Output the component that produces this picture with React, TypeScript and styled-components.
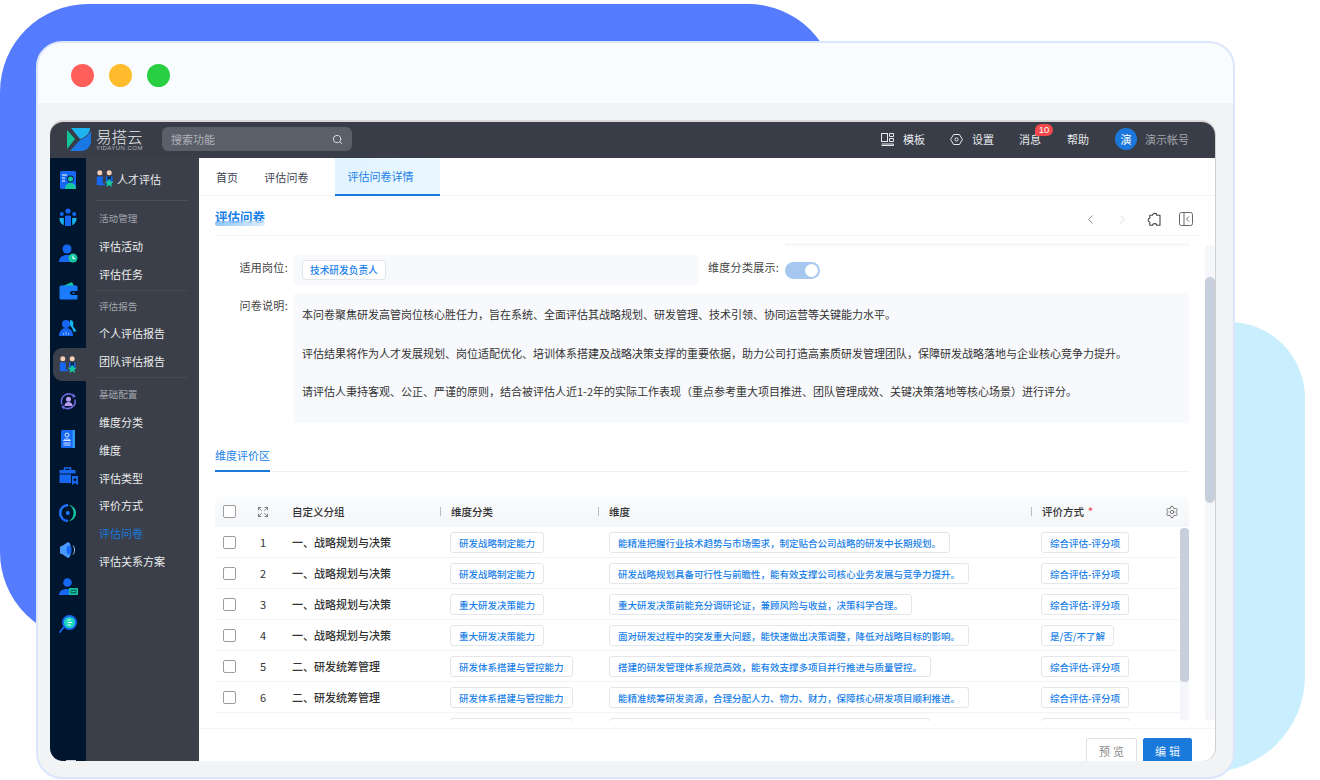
import { ChevronLeft, ChevronRight, Expand, Search, Settings } from 'lucide-react';
import styled, { createGlobalStyle } from 'styled-components';

const GlobalStyle = createGlobalStyle`
  html, body {
    margin: 0;
    padding: 0;
    background: #fff;
    overflow: hidden;
  }
  * {
    box-sizing: border-box;
  }
  body {
    font-family: "Noto Sans CJK SC", "Noto Sans", sans-serif;
  }
`;

const Page = styled.div`
  position: relative;
  width: 1320px;
  height: 780px;
  padding: 41px 85px 0 36px;
  overflow: hidden;
`;

const BlueBlob = styled.div`
  position: absolute;
  left: 0;
  top: 4px;
  width: 836px;
  height: 636px;
  border-radius: 88px;
  background: #557bff;
`;

const CyanBlob = styled.div`
  position: absolute;
  left: 900px;
  top: 322px;
  width: 405px;
  height: 450px;
  border-radius: 76px 76px 96px 76px;
  background: #c9efff;
`;

const Window = styled.div`
  position: relative;
  width: 1199px;
  height: 738px;
  display: flex;
  flex-direction: column;
  border: 2px solid #d9e6fc;
  border-radius: 26px;
  background: #f1f3f5;
  overflow: hidden;
`;

const TitleBar = styled.div`
  height: 60px;
  flex: none;
  display: flex;
  align-items: center;
  gap: 15px;
  padding: 5px 0 0 33px;
  background: #f9fcff;
`;

const Light = styled.span<{ $color: string }>`
  width: 23px;
  height: 23px;
  border-radius: 50%;
  background: ${(p) => p.$color};
`;

const AppFrame = styled.div`
  flex: none;
  width: 1165px;
  height: 639px;
  margin: 19px 0 0 12px;
  display: flex;
  flex-direction: column;
  border-radius: 13px;
  overflow: hidden;
  background: #fff;
  box-shadow: 0 -2px 0 #d9d9d9, 1px 0 0 #cfcfcf;
`;

const Header = styled.header`
  height: 36px;
  flex: none;
  display: flex;
  align-items: center;
  padding: 0 26px 2px 17px;
  background: #383d48;
  color: #e8e9eb;
  font-size: 11px;
`;

const LogoBox = styled.div`
  display: flex;
  align-items: center;
  gap: 5px;
  width: 95px;
`;

const LogoText = styled.div`
  display: flex;
  flex-direction: column;
  color: #e6e7e9;
`;

const LogoName = styled.span`
  font-size: 15.5px;
  line-height: 17px;
  font-weight: 300;
`;

const LogoSub = styled.span`
  font-family: "Liberation Sans", sans-serif;
  font-size: 6px;
  line-height: 6px;
  letter-spacing: 0.45px;
  color: #b5b8bd;
`;

const SearchBox = styled.div`
  width: 190px;
  height: 24px;
  display: flex;
  align-items: center;
  justify-content: space-between;
  padding: 0 9px;
  border-radius: 6px;
  background: #5a5f6a;
  color: #b0b3b9;
`;

const HeaderRight = styled.div`
  margin-left: auto;
  display: flex;
  align-items: center;
`;

const HeaderItem = styled.div<{ $gap?: number }>`
  position: relative;
  display: flex;
  align-items: center;
  gap: 9px;
  margin-right: ${(p) => p.$gap ?? 25}px;
`;

const Badge = styled.span`
  position: absolute;
  left: 16px;
  top: -7px;
  width: 18px;
  height: 12px;
  border-radius: 6px 6px 6px 2px;
  background: #f0484b;
  color: #fff;
  font-family: "Liberation Sans", sans-serif;
  font-size: 9.5px;
  line-height: 12px;
  text-align: center;
`;

const Avatar = styled.span`
  width: 22px;
  height: 22px;
  border-radius: 50%;
  background: #1b78da;
  color: #fff;
  text-align: center;
  line-height: 22px;
  margin-right: 8px;
`;

const AccountName = styled.span`
  color: #a3a6ac;
`;

const Workspace = styled.div`
  flex: 1;
  min-height: 0;
  display: flex;
`;

const Rail = styled.nav`
  width: 36px;
  flex: none;
  display: flex;
  flex-direction: column;
  padding: 3px 0 0 3px;
  background: #00152e;
  position: relative;
`;

const RailItem = styled.div<{ $active?: boolean }>`
  height: 37px;
  display: flex;
  align-items: center;
  justify-content: center;
  padding-right: 3px;
  ${(p) =>
    p.$active
      ? `
    background: #3a3f4a;
    border-radius: 9px 0 0 9px;
    height: 33px;
    margin: 2px 0;
  `
      : ''}
`;

const RailFoot = styled.span`
  position: absolute;
  left: 16px;
  bottom: 0;
  width: 10px;
  height: 1px;
  background: #cfd3d8;
`;

const Menu = styled.aside`
  width: 113px;
  flex: none;
  display: flex;
  flex-direction: column;
  padding: 0 11px 0 10px;
  background: #3a3f4a;
  color: #e9eaec;
  font-size: 11px;
`;

const MenuTitle = styled.div`
  height: 43px;
  flex: none;
  display: flex;
  align-items: center;
  gap: 3px;
  border-bottom: 1px solid #4a4f5a;
`;

const MenuGroup = styled.div<{ $top: number }>`
  height: 28px;
  flex: none;
  display: flex;
  align-items: center;
  padding-left: 3px;
  margin-top: ${(p) => p.$top}px;
  color: #a3a6ac;
  font-size: 9.6px;
`;

const MenuItem = styled.div<{ $active?: boolean }>`
  height: 27.8px;
  flex: none;
  display: flex;
  align-items: center;
  padding-left: 3px;
  color: ${(p) => (p.$active ? '#1a7adb' : '#eceded')};
`;

const MenuLine = styled.div`
  height: 1px;
  flex: none;
  margin-top: 2px;
  background: #454a55;
`;

const Main = styled.main`
  flex: 1;
  min-width: 0;
  display: flex;
  flex-direction: column;
  color: #333;
  font-size: 11px;
`;

const Tabs = styled.div`
  height: 38px;
  flex: none;
  display: flex;
  align-items: stretch;
  gap: 26px;
  padding-left: 17px;
  border-bottom: 1px solid #f2f3f5;
`;

const Tab = styled.div<{ $active?: boolean }>`
  display: flex;
  align-items: center;
  color: ${(p) => (p.$active ? '#1a7fe8' : '#3d4250')};
  letter-spacing: ${(p) => (p.$active ? 0 : 0.1)}px;
  ${(p) =>
    p.$active
      ? `
    padding: 0 26px 0 13px;
    background: linear-gradient(90deg, #e2f3ff, #ebf7ff);
    border-bottom: 2px solid #1a7adb;
    margin-bottom: -1px;
  `
      : ''}
`;

const PageHead = styled.div`
  height: 40px;
  flex: none;
  display: flex;
  align-items: center;
  justify-content: space-between;
  margin: 0 16px;
  padding: 7px 6px 0 0;
  border-bottom: 1px solid #f3f4f6;
`;

const PageTitle = styled.h1`
  position: relative;
  margin: -5px 0 0;
  color: #1a7fe8;
  font-size: 12.5px;
  font-weight: 700;
  &::after {
    content: '';
    position: absolute;
    left: 0;
    right: 0;
    bottom: 0;
    height: 5px;
    border-radius: 3px;
    background: linear-gradient(90deg, #6cb2f4, #d5e9fc);
    opacity: 0.75;
  }
`;

const PageTools = styled.div`
  display: flex;
  align-items: center;
  gap: 17px;
  color: #666;
`;

const Body = styled.div`
  flex: 1;
  min-height: 0;
  display: flex;
`;

const Scroll = styled.div`
  flex: 1;
  min-width: 0;
  display: flex;
  flex-direction: column;
  padding: 7px 16px 0;
  overflow: hidden;
`;

const Sliver = styled.div`
  width: 404px;
  height: 3px;
  flex: none;
  align-self: flex-end;
  background: #f5f7fb;
`;

const FieldRow = styled.div`
  display: flex;
  align-items: flex-start;
  flex: none;
  margin-top: 9px;
`;

const DescRow = styled(FieldRow)`
  margin-top: 8px;
`;

const FieldLabel = styled.div`
  width: 73px;
  margin-right: 6px;
  text-align: right;
  line-height: 25px;
  letter-spacing: 0.3px;
  color: #444;
`;

const PostField = styled.div`
  width: 404px;
  height: 30px;
  display: flex;
  align-items: center;
  padding-left: 8px;
  border-radius: 3px;
  background: #f8f9fc;
`;

const SwitchLabel = styled.div`
  margin: 0 6px 0 10px;
  line-height: 25px;
  letter-spacing: 0.3px;
  color: #444;
`;

const Toggle = styled.div`
  width: 35px;
  height: 17px;
  margin-top: 7px;
  display: flex;
  align-items: center;
  justify-content: flex-end;
  padding-right: 2px;
  border-radius: 9px;
  background: #a6c7f0;
  &::after {
    content: '';
    width: 13px;
    height: 13px;
    border-radius: 50%;
    background: #fff;
  }
`;

const DescBox = styled.div`
  width: 895px;
  height: 130px;
  padding: 12px 8px 0;
  border-radius: 3px;
  background: #f8f9fc;
  line-height: 19.25px;
  color: #333;
`;

const Paragraph = styled.p`
  margin: 0 0 19.25px;
  white-space: nowrap;
`;

const SectionTabs = styled.div`
  flex: none;
  margin-top: 24px;
  height: 25px;
  border-bottom: 1px solid #f0f1f4;
`;

const SectionTab = styled.div`
  display: inline-block;
  height: 25px;
  line-height: 17px;
  border-bottom: 2px solid #1a7adb;
  color: #1a7fe8;
`;

const Table = styled.div`
  flex: none;
  margin-top: 25px;
  position: relative;
`;

const cols = '30px 36px 159px 158px 433px 158px';

const TableHead = styled.div`
  height: 30px;
  display: grid;
  grid-template-columns: ${cols};
  align-items: center;
  padding-bottom: 1px;
  border-radius: 3px 3px 0 0;
  background: linear-gradient(180deg, #fafbfc, #f5f6f9);
  font-weight: 500;
  font-size: 10.5px;
  color: #333;
`;

const HeadCell = styled.div<{ $sep?: boolean }>`
  position: relative;
  display: flex;
  align-items: center;
  justify-content: space-between;
  padding: 0 10px 0 11px;
  ${(p) =>
    p.$sep
      ? `
    &::before {
      content: '';
      position: absolute;
      left: 0;
      top: 3px;
      bottom: 3px;
      width: 1px;
      background: #b9bcc4;
    }
  `
      : ''}
`;

const Required = styled.span`
  color: #f0484b;
  margin-left: 4px;
`;

const HeadTitle = styled.span`
  display: flex;
  align-items: center;
`;

const CenterCell = styled.div`
  display: flex;
  justify-content: center;
  align-items: center;
  color: #333;
`;

const CheckCell = styled(CenterCell)`
  padding-right: 2px;
`;

const TableBody = styled.div`
  position: relative;
  height: 194px;
  overflow: hidden;
`;

const Row = styled.div`
  height: 31px;
  display: grid;
  grid-template-columns: ${cols};
  align-items: center;
  border-bottom: 1px solid #f3f4f6;
`;

const GroupCell = styled.div`
  padding-left: 11px;
  color: #333;
  font-weight: 500;
`;

const TagCell = styled.div<{ $pad?: number }>`
  padding-left: ${(p) => p.$pad ?? 10}px;
  padding-top: 1px;
  display: flex;
`;

const CheckBox = styled.span`
  width: 13px;
  height: 13px;
  border: 1.5px solid #9d9d9d;
  border-radius: 2px;
  background: #fff;
`;

const Tag = styled.span`
  height: 21px;
  padding: 0 8px;
  display: inline-flex;
  align-items: center;
  border: 1px solid #e4e6ea;
  border-radius: 3px;
  background: #fff;
  color: #1a7fe8;
  font-size: 9.5px;
  font-weight: 500;
  white-space: nowrap;
`;

const EmptyTag = styled(Tag)<{ $w: number }>`
  width: ${(p) => p.$w}px;
`;

const PostTag = styled(Tag)`
  height: 20px;
  padding: 0 7px;
  font-size: 9.7px;
`;

const InnerTrack = styled.div`
  position: absolute;
  right: 0;
  top: 1px;
  bottom: 0;
  width: 9px;
  border-radius: 4px;
  background: #f5f6f9;
`;

const InnerThumb = styled.div`
  height: 154px;
  border-radius: 4px;
  background: #c8cfdc;
`;

const OuterTrack = styled.div`
  width: 10px;
  flex: none;
  margin: 9px 0 8px;
  border-radius: 4px;
  background: #f5f6f9;
  padding-top: 32px;
`;

const OuterThumb = styled.div`
  height: 226px;
  border-radius: 5px;
  background: #c8cfdc;
`;

const Footer = styled.div`
  height: 33px;
  flex: none;
  display: flex;
  justify-content: flex-end;
  gap: 6px;
  padding: 9px 23px 0 0;
  border-top: 1px solid #f3f4f6;
  overflow: hidden;
`;

const Button = styled.button<{ $primary?: boolean }>`
  width: ${(p) => (p.$primary ? 49 : 51)}px;
  height: 26px;
  flex: none;
  padding: 0;
  border: 1px solid ${(p) => (p.$primary ? '#1a7adb' : '#dfe1e6')};
  border-radius: 2px;
  background: ${(p) => (p.$primary ? '#1a7adb' : '#fff')};
  color: ${(p) => (p.$primary ? '#e8f2fc' : '#8a8a8a')};
  font-family: inherit;
  font-size: 11px;
  letter-spacing: 3px;
  text-indent: 3px;
`;

// small colour drawings for the rail and header, all on an 18px box
const BLUE = '#1668f2';
const CYAN = '#17b5f0';
const TEAL = '#14c7a0';

const Logo = () => (
  <svg width="24" height="24" viewBox="0 0 24 24">
    <path d="M0 3 L8 12 L0 22 Z" fill="#12c49a" />
    <path d="M4 1 H23 C23 6 19 10 13 12 Z" fill="#1fb4f0" />
    <path d="M24 4 V14 C24 19 20 24 14 24 H3 L13 13 C18 11 22 8 24 4 Z" fill="#1a78e6" />
  </svg>
);

const IconProfile = () => (
  <svg width="18" height="18" viewBox="0 0 18 18">
    <rect x="1" y="0" width="16" height="18" rx="1.5" fill={BLUE} />
    <path d="M3 4h5M3 7h3M3 10h3" stroke="#fff" strokeWidth="1" />
    <circle cx="11.5" cy="8" r="3.4" fill="#002144" />
    <circle cx="11.5" cy="8" r="2.5" fill={TEAL} />
    <path d="M6 18c0-4 2.500-6 5.500-6s5.500 2 5.500 6z" fill={TEAL} />
  </svg>
);

const IconGroup = () => (
  <svg width="18" height="18" viewBox="0 0 18 18">
    <circle cx="9" cy="3" r="2.600" fill={BLUE} />
    <circle cx="2.800" cy="6" r="2" fill={BLUE} />
    <circle cx="15.200" cy="6" r="2" fill={BLUE} />
    <path d="M0.500 10h4.300v7C2 16.500.5 13 .5 10zM17.500 10h-4.300v7c2.800-.5 4.300-4 4.300-7z" fill={CYAN} />
    <path d="M6 8.500C6 7 12 7 12 8.500V18H6z" fill={BLUE} />
  </svg>
);

const IconPersonClock = () => (
  <svg width="19" height="19" viewBox="0 0 19 19">
    <circle cx="8" cy="5" r="4.500" fill={BLUE} />
    <path d="M0 18c0-5 3.500-7 8-7 2 0 3 .4 4 1v6z" fill={BLUE} />
    <circle cx="14" cy="14" r="4.500" fill={TEAL} />
    <path d="M14 11.500V14.500H16.200" stroke="#fff" strokeWidth="1.100" fill="none" />
  </svg>
);

const IconWallet = () => (
  <svg width="19" height="18" viewBox="0 0 19 18">
    <path d="M4 4L13 0l2 4z" fill={TEAL} />
    <rect x="0.500" y="3.500" width="18" height="14" rx="1.500" fill="#1a7bff" />
    <path d="M13 9h6v4h-6a2 2 0 010-4z" fill="#00152e" />
    <circle cx="14.500" cy="11" r=".9" fill="#1a7bff" />
  </svg>
);

const IconPeople = () => (
  <svg width="18" height="18" viewBox="0 0 18 18">
    <path d="M11 1c3 0 4 3 3 6l3.500 5-3 1c-.5-3-2-5-3.500-6.500z" fill={CYAN} />
    <circle cx="7" cy="5" r="4" fill={BLUE} />
    <path d="M0 17c0-5 3-8 7-8s7 3 7 8z" fill={BLUE} />
    <path d="M4.500 16v-2M7 16v-3.500M9.500 16v-2" stroke="#7fb1ff" strokeWidth="1" />
  </svg>
);

const IconTeam = ({ size = 18 }: { size?: number }) => (
  <svg width={size} height={size} viewBox="0 0 18 18">
    <circle cx="3.800" cy="2.800" r="2.500" fill="#f6cfb4" />
    <circle cx="13.200" cy="2.800" r="2.500" fill="#f6cfb4" />
    <path d="M.8 6.500h6v7h2.500v1.700H.8z" fill={BLUE} />
    <path d="M10 6.500h6.500v5h-6.500z" fill={BLUE} />
    <path d="M11.500 6.500h3.500v3.200h-3.500z" fill="#00264f" />
    <path d="M13.200 8.500l1.400 3 3.100.3-2.400 2.100.8 3.100-2.900-1.700-2.800 1.700.7-3.100-2.300-2.100 3.100-.3z" fill={TEAL} />
  </svg>
);

const IconCycle = () => (
  <svg width="19" height="19" viewBox="0 0 19 19">
    <path d="M3 12.500A7.500 7.500 0 0115.500 4.500" stroke="#6f68e0" strokeWidth="1.600" fill="none" />
    <path d="M16 7.500A7.500 7.500 0 013.600 14.500" stroke="#6f68e0" strokeWidth="1.600" fill="none" />
    <path d="M14 1.500l3 3-3.500 1.500zM5 17.500l-3-3 3.500-1.500z" fill="#6f68e0" />
    <circle cx="9.500" cy="7.200" r="2.500" fill="#bb9df2" />
    <path d="M5.500 14c0-3 2-4 4-4s4 1 4 4z" fill="#bb9df2" />
  </svg>
);

const IconBook = () => (
  <svg width="16" height="18" viewBox="0 0 16 18">
    <rect x="1" y="0" width="14" height="18" rx="1.500" fill={BLUE} />
    <rect x="12.500" y="0" width="2.500" height="18" fill="#2f9bf5" />
    <circle cx="7" cy="5" r="2" fill="none" stroke="#d5e5ff" strokeWidth="1" />
    <path d="M3.500 10.500c0-2 7-2 7 0zM3.500 13h7M3.500 15h7" stroke="#d5e5ff" strokeWidth="1" fill="none" />
  </svg>
);

const IconCase = () => (
  <svg width="19" height="18" viewBox="0 0 19 18">
    <path d="M5.500 3V1h6v2" stroke={BLUE} strokeWidth="1.500" fill="none" />
    <path d="M.5 3h16v3.500H.5z" fill={BLUE} />
    <path d="M.5 7.500h11.500V16H.5z" fill={BLUE} />
    <path d="M13 9h6v9l-3-2-3 2z" fill={BLUE} />
    <path d="M16 10.500l.7 1.500 1.500.1-1.200 1 .4 1.500-1.400-.8-1.400.8.4-1.500-1.200-1 1.500-.1z" fill="#00152e" />
  </svg>
);

const IconRing = () => (
  <svg width="18" height="18" viewBox="0 0 18 18">
    <path d="M9 1a8 8 0 100 16" stroke={BLUE} strokeWidth="2.400" fill="none" />
    <path d="M9 1c4.500 0 8 3.500 8 8s-3.500 8-8 8c2.500-.5 5.500-3 5.500-8S11.500 1.500 9 1z" fill={TEAL} />
    <path d="M9 1.500a7.500 7.500 0 00-5 13" stroke="#2f86ff" strokeWidth="1" fill="none" />
    <circle cx="8.800" cy="9" r="2" fill="#1a7bff" />
  </svg>
);

const IconSpeaker = () => (
  <svg width="18" height="18" viewBox="0 0 18 18">
    <path d="M1 6.500C1 5.500 2 5 3 5l6-4c2 0 3 4 3 8s-1 8-3 8l-6-4c-1 0-2-.5-2-1.500z" fill="#4a9bff" />
    <ellipse cx="10" cy="9" rx="2.500" ry="4.500" fill="#1668f2" />
    <path d="M14 4.500c2 2.500 2 6.500 0 9" stroke="#a9c7ef" strokeWidth="1" fill="none" />
  </svg>
);

const IconCard = () => (
  <svg width="19" height="18" viewBox="0 0 19 18">
    <circle cx="8.500" cy="4.500" r="4.300" fill={BLUE} />
    <path d="M0 17c0-4 3.500-6 8-6 1.500 0 3 .2 4 .8V17z" fill={BLUE} />
    <rect x="10" y="10" width="9" height="7" rx="1" fill={TEAL} />
    <rect x="11.500" y="11.500" width="6" height="4" fill="#0b6e6a" />
    <path d="M12.500 13.500h4" stroke={TEAL} strokeWidth="1" />
  </svg>
);

const IconFind = () => (
  <svg width="18" height="18" viewBox="0 0 18 18">
    <circle cx="10.500" cy="7.500" r="7.500" fill={BLUE} />
    <circle cx="10.500" cy="7.500" r="5.500" fill="#1fd8c0" />
    <path d="M8.500 5h3.500M8.500 7.500h4.500M8.500 10h3.500" stroke="#d8fff6" strokeWidth="1" />
    <path d="M4.500 12.500L1 17" stroke={BLUE} strokeWidth="1.800" strokeLinecap="round" />
  </svg>
);

const TemplateIcon = () => (
  <svg width="13" height="13" viewBox="0 0 13 13" fill="none" stroke="#e8e9eb" strokeWidth="1">
    <rect x="0.500" y="0.500" width="6" height="8" />
    <path d="M8.500 .5h4v3h-4zM8.500 5.500h4v3h-4zM.5 11h12v1.500H.5" />
  </svg>
);

const HexIcon = () => (
  <svg width="13" height="13" viewBox="0 0 13 13" fill="none" stroke="#e8e9eb" strokeWidth="1">
    <path d="M3.600 1.500h5.800l3 5-3 5H3.600l-3-5z" />
    <circle cx="6.500" cy="6.500" r="1.600" />
  </svg>
);

const PuzzleIcon = () => (
  <svg width="15" height="15" viewBox="0 0 15 15" fill="none" stroke="#444" strokeWidth="1.100" strokeLinejoin="round">
    <path d="M5.500 3.200C5.500 .8 9.800 .8 9.800 3.200H13V13.300H9.800C9.800 11 5.500 11 5.500 13.300H2.800V10C.6 10 .6 6.300 2.800 6.300V3.200Z" />
  </svg>
);

const CollapseIcon = () => (
  <svg width="14" height="14" viewBox="0 0 14 14" fill="none" stroke="#666" strokeWidth="1">
    <rect x="0.500" y="0.500" width="13" height="13" rx="2" />
    <path d="M5 .5v13M10 4.500L7.500 7 10 9.500" />
  </svg>
);

const railIcons = [
  <IconProfile />,
  <IconGroup />,
  <IconPersonClock />,
  <IconWallet />,
  <IconPeople />,
  <IconTeam />,
  <IconCycle />,
  <IconBook />,
  <IconCase />,
  <IconRing />,
  <IconSpeaker />,
  <IconCard />,
  <IconFind />,
];

const paragraphs = [
  '本问卷聚焦研发高管岗位核心胜任力\uFF0C旨在系统、全面评估其战略规划、研发管理、技术引领、协同运营等关键能力水平。',
  '评估结果将作为人才发展规划、岗位适配优化、培训体系搭建及战略决策支撑的重要依据\uFF0C助力公司打造高素质研发管理团队\uFF0C保障研发战略落地与企业核心竞争力提升。',
  '请评估人秉持客观、公正、严谨的原则\uFF0C结合被评估人近1-2年的实际工作表现\uFF08重点参考重大项目推进、团队管理成效、关键决策落地等核心场景\uFF09进行评分。',
];

const rows = [
  ['一、战略规划与决策', '研发战略制定能力', '能精准把握行业技术趋势与市场需求\uFF0C制定贴合公司战略的研发中长期规划。', '综合评估-评分项'],
  ['一、战略规划与决策', '研发战略制定能力', '研发战略规划具备可行性与前瞻性\uFF0C能有效支撑公司核心业务发展与竞争力提升。', '综合评估-评分项'],
  ['一、战略规划与决策', '重大研发决策能力', '重大研发决策前能充分调研论证\uFF0C兼顾风险与收益\uFF0C决策科学合理。', '综合评估-评分项'],
  ['一、战略规划与决策', '重大研发决策能力', '面对研发过程中的突发重大问题\uFF0C能快速做出决策调整\uFF0C降低对战略目标的影响。', '是/否/不了解'],
  ['二、研发统筹管理', '研发体系搭建与管控能力', '搭建的研发管理体系规范高效\uFF0C能有效支撑多项目并行推进与质量管控。', '综合评估-评分项'],
  ['二、研发统筹管理', '研发体系搭建与管控能力', '能精准统筹研发资源\uFF0C合理分配人力、物力、财力\uFF0C保障核心研发项目顺利推进。', '综合评估-评分项'],
];

export default function App() {
  return (
    <Page>
      <GlobalStyle />
      <BlueBlob />
      <CyanBlob />
      <Window>
        <TitleBar>
          <Light $color="#ff5f5b" />
          <Light $color="#ffbd2e" />
          <Light $color="#29cf42" />
        </TitleBar>
        <AppFrame>
          <Header>
            <LogoBox>
              <Logo />
              <LogoText>
                <LogoName>易搭云</LogoName>
                <LogoSub>YIDAYUN.COM</LogoSub>
              </LogoText>
            </LogoBox>
            <SearchBox>
              <span>搜索功能</span>
              <Search size={11} color="#e4e5e7" />
            </SearchBox>
            <HeaderRight>
              <HeaderItem>
                <TemplateIcon />
                <span>模板</span>
              </HeaderItem>
              <HeaderItem>
                <HexIcon />
                <span>设置</span>
              </HeaderItem>
              <HeaderItem $gap={26}>
                <span>消息</span>
                <Badge>10</Badge>
              </HeaderItem>
              <HeaderItem $gap={26}>
                <span>帮助</span>
              </HeaderItem>
              <Avatar>演</Avatar>
              <AccountName>演示帐号</AccountName>
            </HeaderRight>
          </Header>
          <Workspace>
            <Rail>
              {railIcons.map((icon, i) => (
                <RailItem key={i} $active={i === 5}>
                  {icon}
                </RailItem>
              ))}
              <RailFoot />
            </Rail>
            <Menu>
              <MenuTitle>
                <IconTeam size={18} />
                <span>人才评估</span>
              </MenuTitle>
              <MenuGroup $top={3}>活动管理</MenuGroup>
              <MenuItem>评估活动</MenuItem>
              <MenuItem>评估任务</MenuItem>
              <MenuLine />
              <MenuGroup $top={1}>评估报告</MenuGroup>
              <MenuItem>个人评估报告</MenuItem>
              <MenuItem>团队评估报告</MenuItem>
              <MenuLine />
              <MenuGroup $top={2}>基础配置</MenuGroup>
              <MenuItem>维度分类</MenuItem>
              <MenuItem>维度</MenuItem>
              <MenuItem>评估类型</MenuItem>
              <MenuItem>评价方式</MenuItem>
              <MenuItem $active>评估问卷</MenuItem>
              <MenuItem>评估关系方案</MenuItem>
            </Menu>
            <Main>
              <Tabs>
                <Tab>首页</Tab>
                <Tab>评估问卷</Tab>
                <Tab $active>评估问卷详情</Tab>
              </Tabs>
              <PageHead>
                <PageTitle>评估问卷</PageTitle>
                <PageTools>
                  <ChevronLeft size={15} strokeWidth={1.2} color="#666" />
                  <ChevronRight size={15} strokeWidth={1.2} color="#c9c9c9" />
                  <PuzzleIcon />
                  <CollapseIcon />
                </PageTools>
              </PageHead>
              <Body>
                <Scroll>
                  <Sliver />
                  <FieldRow>
                    <FieldLabel>适用岗位:</FieldLabel>
                    <PostField>
                      <PostTag>技术研发负责人</PostTag>
                    </PostField>
                    <SwitchLabel>维度分类展示:</SwitchLabel>
                    <Toggle />
                  </FieldRow>
                  <DescRow>
                    <FieldLabel>问卷说明:</FieldLabel>
                    <DescBox>
                      {paragraphs.map((text) => (
                        <Paragraph key={text}>{text}</Paragraph>
                      ))}
                    </DescBox>
                  </DescRow>
                  <SectionTabs>
                    <SectionTab>维度评价区</SectionTab>
                  </SectionTabs>
                  <Table>
                    <TableHead>
                      <CheckCell>
                        <CheckBox />
                      </CheckCell>
                      <CenterCell>
                        <Expand size={12} strokeWidth={1.4} color="#555" />
                      </CenterCell>
                      <HeadCell>自定义分组</HeadCell>
                      <HeadCell $sep>维度分类</HeadCell>
                      <HeadCell $sep>维度</HeadCell>
                      <HeadCell $sep>
                        <HeadTitle>
                          评价方式<Required>*</Required>
                        </HeadTitle>
                        <Settings size={14} strokeWidth={1.2} color="#444" />
                      </HeadCell>
                    </TableHead>
                    <TableBody>
                      {rows.map((row, i) => (
                        <Row key={i}>
                          <CheckCell>
                            <CheckBox />
                          </CheckCell>
                          <CenterCell>{i + 1}</CenterCell>
                          <GroupCell>{row[0]}</GroupCell>
                          <TagCell>
                            <Tag>{row[1]}</Tag>
                          </TagCell>
                          <TagCell $pad={11}>
                            <Tag>{row[2]}</Tag>
                          </TagCell>
                          <TagCell>
                            <Tag>{row[3]}</Tag>
                          </TagCell>
                        </Row>
                      ))}
                      <Row>
                        <span />
                        <span />
                        <span />
                        <TagCell>
                          <EmptyTag $w={123} />
                        </TagCell>
                        <TagCell $pad={11}>
                          <EmptyTag $w={321} />
                        </TagCell>
                        <TagCell>
                          <EmptyTag $w={89} />
                        </TagCell>
                      </Row>
                      <InnerTrack>
                        <InnerThumb />
                      </InnerTrack>
                    </TableBody>
                  </Table>
                </Scroll>
                <OuterTrack>
                  <OuterThumb />
                </OuterTrack>
              </Body>
              <Footer>
                <Button>预览</Button>
                <Button $primary>编辑</Button>
              </Footer>
            </Main>
          </Workspace>
        </AppFrame>
      </Window>
    </Page>
  );
}
